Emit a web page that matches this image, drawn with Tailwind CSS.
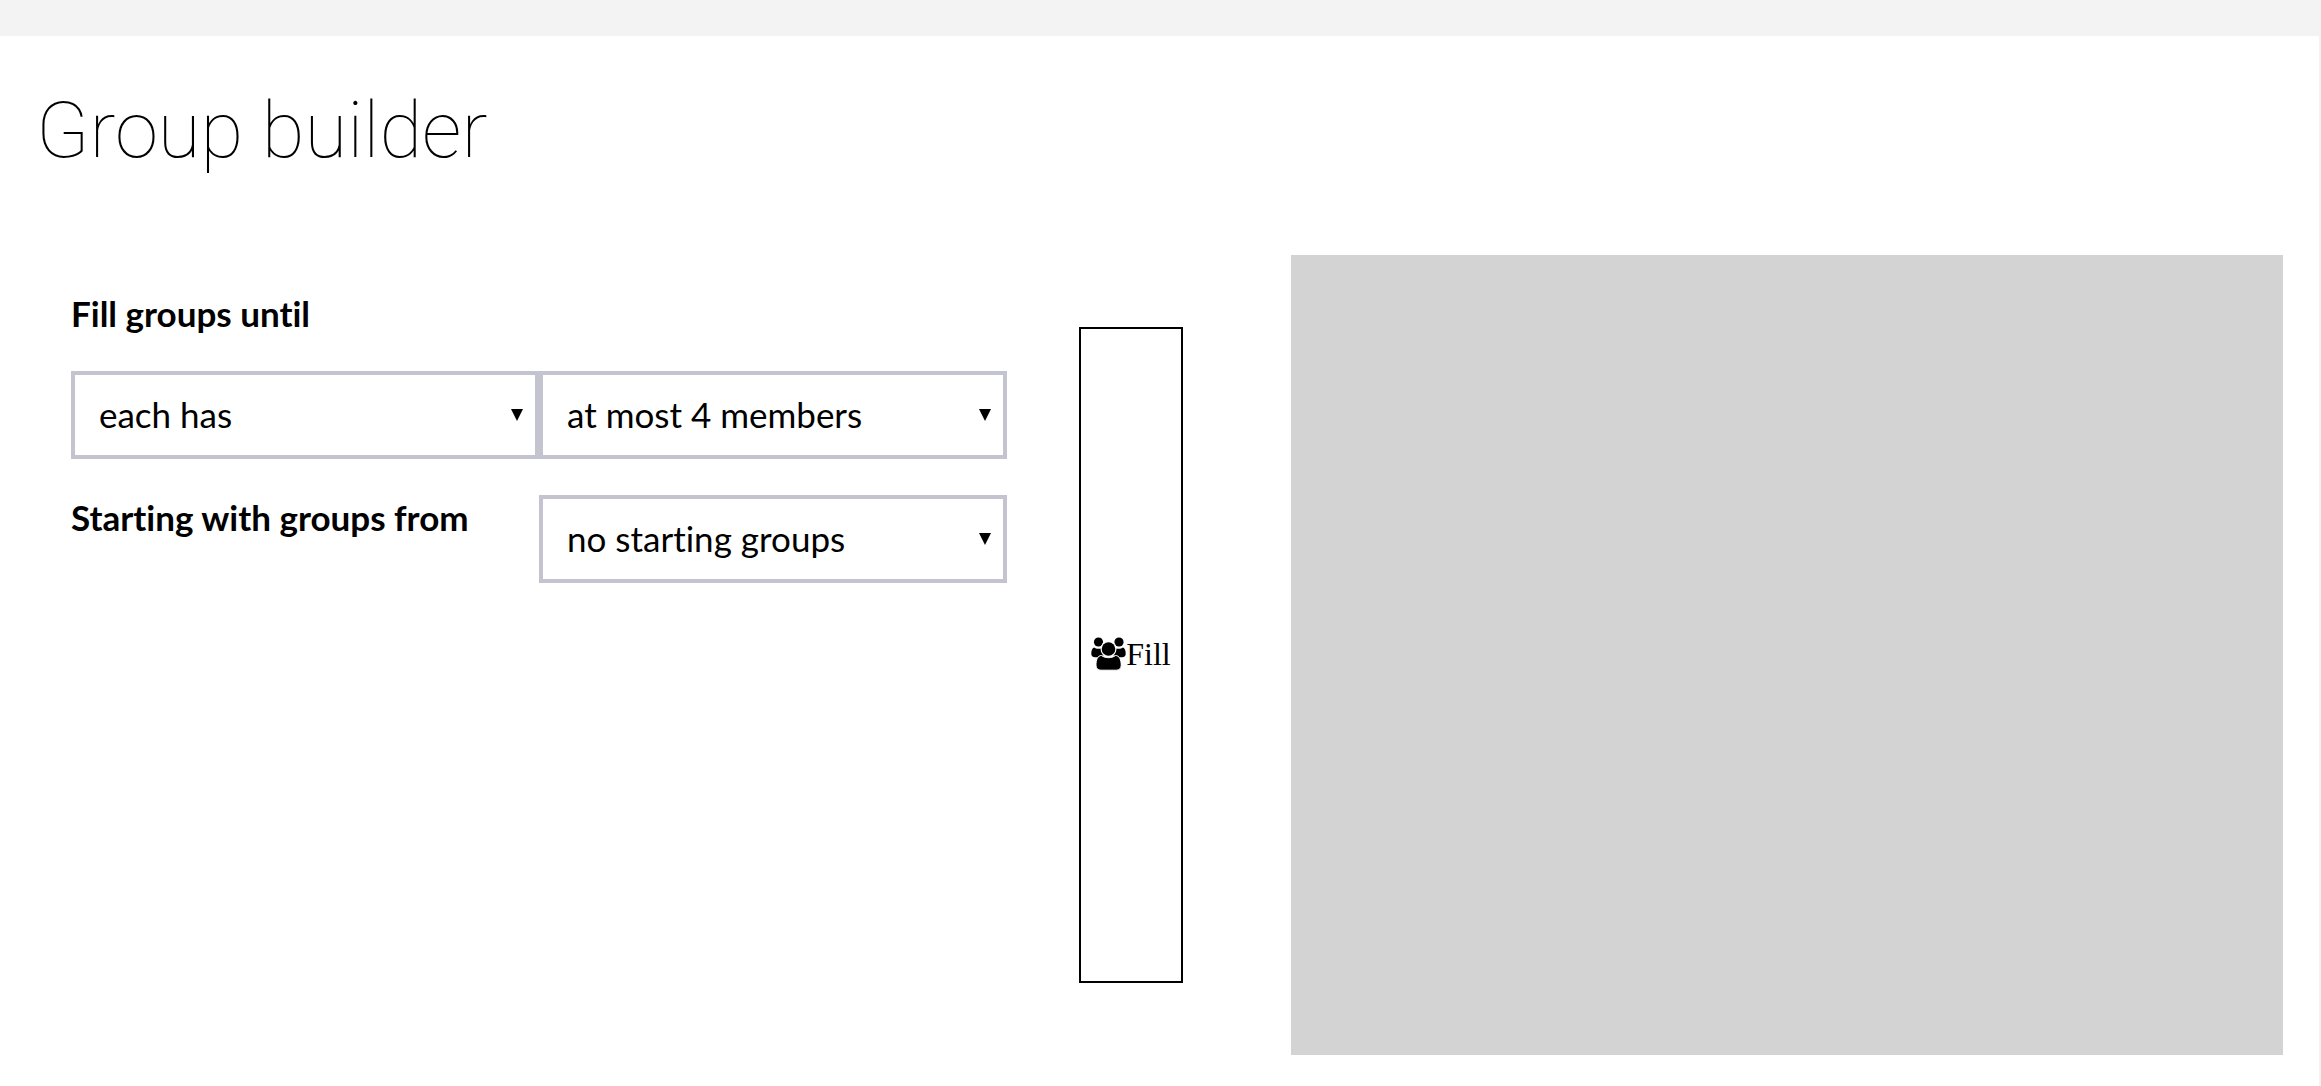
<!DOCTYPE html>
<html lang="en">
<head>
<meta charset="utf-8">
<meta name="viewport" content="width=device-width, initial-scale=1">
<title>Group builder</title>
<script src="https://cdn.jsdelivr.net/npm/@tailwindcss/browser@4"></script>
</head>
<body class="min-h-screen bg-[#f3f3f3] pt-9 pr-0.5 text-black flex flex-col">
<main class="flex-1 bg-white px-9 pb-[31px]">
  <h1 class="pt-[43px] text-[78px] leading-[104px] font-thin font-['Roboto',sans-serif]">Group builder</h1>
  <div class="mt-[72px] grid grid-cols-[971fr_auto_1028fr] min-h-[800px]">
    <form class="pl-[35px] pt-9 font-['Lato',sans-serif] text-[35px] leading-[44px] [font-variant-ligatures:none]">
      <div class="grid grid-cols-2">
        <label for="rule" class="col-span-2 mb-9 font-bold">Fill groups until</label>
        <div class="relative">
          <select id="rule" class="block h-[88px] w-full appearance-none border-4 border-[#c4c3d0] bg-white px-6 pb-0.5">
            <option>each has</option>
          </select>
          <svg class="pointer-events-none absolute right-4 top-[38px] size-3" viewBox="0 0 12 12" aria-hidden="true"><path d="M0 0h12L6 12z"/></svg>
        </div>
        <div class="relative">
          <select aria-label="Group size" class="block h-[88px] w-full appearance-none border-4 border-[#c4c3d0] bg-white px-6 pb-0.5">
            <option>at most 4 members</option>
          </select>
          <svg class="pointer-events-none absolute right-4 top-[38px] size-3" viewBox="0 0 12 12" aria-hidden="true"><path d="M0 0h12L6 12z"/></svg>
        </div>
        <label for="start" class="mt-9 whitespace-nowrap font-bold">Starting with groups from</label>
        <div class="relative mt-9">
          <select id="start" class="block h-[88px] w-full appearance-none border-4 border-[#c4c3d0] bg-white px-6 pb-0.5">
            <option>no starting groups</option>
          </select>
          <svg class="pointer-events-none absolute right-4 top-[38px] size-3" viewBox="0 0 12 12" aria-hidden="true"><path d="M0 0h12L6 12z"/></svg>
        </div>
      </div>
    </form>
    <button type="button" class="m-[72px] flex w-[104px] items-center justify-center border-2 border-black pb-0.5 font-['Liberation_Serif',serif] text-[32px] leading-9">
      <svg class="h-[34px] w-[35px] shrink-0" viewBox="0 0 35 34" aria-hidden="true">
        <circle cx="7.5" cy="5" r="4.6"/><circle cx="28" cy="5" r="4.6"/>
        <path d="M3 10.500c1.500 1 3 1.500 5 1.300 1 0 1.500-.2 2.500-.6-.2 3 .6 5.200 2.200 7.300-2.700 0-4.600.6-6 1.700H4C1.500 20.200.3 19 .3 16.800.3 14 .8 11.500 3 10.500z"/>
        <path d="M32 10.500c-1.500 1-3 1.500-5 1.300-1 0-1.500-.2-2.500-.6.2 3-.6 5.200-2.200 7.300 2.700 0 4.600.6 6 1.700H31c2.500 0 3.700-1.200 3.700-3.400 0-2.800-.5-5.300-2.700-6.300z"/>
        <circle cx="17.500" cy="12" r="8" fill="#fff"/>
        <circle cx="17.500" cy="12" r="6.800"/>
        <path d="M10.500 18.500c2 1.500 4.500 2.200 7 2.200s5-.7 7-2.200c4 0 5.700 4.500 5.700 9.700 0 3.300-2 5-5 5H10c-3 0-5-1.700-5-5 0-5.200 1.500-9.700 5.500-9.700z" stroke="#fff" stroke-width="1"/>
      </svg>
      <span>Fill</span>
    </button>
    <section aria-label="Groups" class="ml-9 bg-[#d3d3d3]"></section>
  </div>
</main>
</body>
</html>
